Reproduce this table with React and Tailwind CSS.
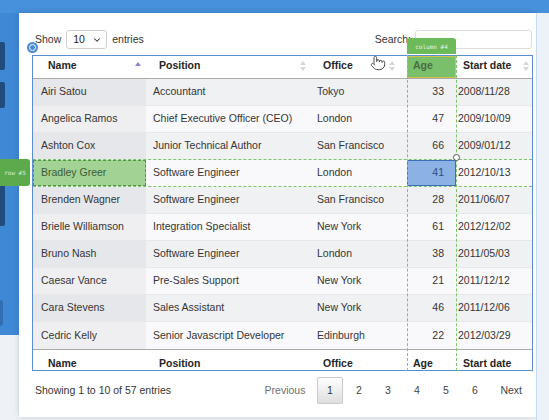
import React from "react";
import { ChevronDown, Pointer } from "lucide-react";

const rows = [
  ["Airi Satou", "Accountant", "Tokyo", "33", "2008/11/28"],
  ["Angelica Ramos", "Chief Executive Officer (CEO)", "London", "47", "2009/10/09"],
  ["Ashton Cox", "Junior Technical Author", "San Francisco", "66", "2009/01/12"],
  ["Bradley Greer", "Software Engineer", "London", "41", "2012/10/13"],
  ["Brenden Wagner", "Software Engineer", "San Francisco", "28", "2011/06/07"],
  ["Brielle Williamson", "Integration Specialist", "New York", "61", "2012/12/02"],
  ["Bruno Nash", "Software Engineer", "London", "38", "2011/05/03"],
  ["Caesar Vance", "Pre-Sales Support", "New York", "21", "2011/12/12"],
  ["Cara Stevens", "Sales Assistant", "New York", "46", "2011/12/06"],
  ["Cedric Kelly", "Senior Javascript Developer", "Edinburgh", "22", "2012/03/29"],
];

function SortBoth() {
  return (
    <svg width="6" height="10" viewBox="0 0 6 10">
      <path d="M3 0L6 4H0Z" fill="#d6d6d6" />
      <path d="M3 10L0 6H6Z" fill="#d6d6d6" />
    </svg>
  );
}

function SortUp() {
  return (
    <svg width="6" height="10" viewBox="0 0 6 10">
      <path d="M3 1L6 5H0Z" fill="#8a84cf" />
    </svg>
  );
}

function Row({ r, i }) {
  const odd = i % 2 === 0;
  const sel = i === 3;
  const rowBg = odd ? "bg-[#f0f1f3]" : "bg-[#f9f9fb]";
  const nameBg = odd ? "bg-[#e6e7ea]" : "bg-[#efeff2]";
  const border =
    i === 2 || i === 3
      ? "border-b border-dashed border-[#7cc46a]"
      : i === 9
      ? ""
      : "border-b border-[#e7e8ea]";
  return (
    <div className={`grid grid-cols-[113px_163px_98px_49px_76px] h-[27px] ${rowBg} ${border}`}>
      {sel ? (
        <div className="flex items-center pl-[7px] bg-[#a3d394] border border-dashed border-[#4f9a40] text-[#3d5a36]">
          {r[0]}
        </div>
      ) : (
        <div className={`flex items-center pl-[8px] ${nameBg}`}>{r[0]}</div>
      )}
      <div className="flex items-center pl-[7px] whitespace-nowrap">{r[1]}</div>
      <div className="flex items-center pl-[8px]">{r[2]}</div>
      {sel ? (
        <div className="flex items-center justify-end pr-[11px] bg-[#8cb1e4] border border-[#3d6fb8] text-[#2d4c7a]">
          {r[3]}
        </div>
      ) : (
        <div className="flex items-center justify-end pr-[12px]">{r[3]}</div>
      )}
      <div className="flex items-center pl-[2px]">{r[4]}</div>
    </div>
  );
}

export default function App() {
  return (
    <div className="relative w-[549px] h-[420px] overflow-hidden bg-[#eef2f6] font-['Liberation_Sans',Arial,sans-serif] text-[10.5px] text-[#353535]">
      <div className="flex flex-col h-full">
        <div className="h-[13px] shrink-0 bg-[#4790db]" />
        <div className="flex flex-1">
          <div className="w-[19px] h-[322px] shrink-0 bg-[#3f88d5] flex flex-col">
            <div className="mt-[29px] w-[5px] h-[28px] rounded-r-[2px] bg-[#1f4c7c]" />
            <div className="mt-[12px] w-[5px] h-[26px] rounded-r-[2px] bg-[#1f4c7c]" />
            <div className="mt-[77px] w-[5px] h-[41px] rounded-r-[2px] bg-[#1f4c7c]" />
            <div className="mt-[74px] w-[3px] h-[26px] rounded-r-[3px] bg-[#2f6fb2]" />
          </div>
          <div className="w-[517px] h-[404px] shrink-0 bg-white shadow-[0_0_6px_rgba(0,0,0,0.15)] pl-[13px] pr-[3px] pt-[17px]">
            {/* controls */}
            <div className="flex items-center justify-between h-[19px]">
              <div className="flex items-center pl-[3px]">
                <span>Show</span>
                <div className="ml-[5px] w-[41px] h-[19px] border border-[#cfcfcf] rounded-[3px] flex items-center justify-between pl-[6px] pr-[4px] text-[#222]">
                  <span>10</span>
                  <ChevronDown size={10} strokeWidth={2.5} color="#333" />
                </div>
                <span className="ml-[5px]">entries</span>
              </div>
              <div className="flex items-center mr-[1px]">
                <span>Search:</span>
                <div className="ml-[4px] w-[117px] h-[19px] border border-[#dcdcdc] rounded-[3px] bg-white" />
              </div>
            </div>

            {/* table */}
            <div className="relative mt-[6px] w-[501px] border border-[#5a8ed4]">
              <div className="grid grid-cols-[113px_163px_98px_49px_76px] h-[23px] border-b border-[#aaaaaa] bg-white font-bold text-[#262626]">
                <div className="flex items-center justify-between pl-[15px] pr-[5px] pb-[3px]">
                  <span>Name</span>
                  <SortUp />
                </div>
                <div className="flex items-center justify-between pl-[13px] pr-[3px] pb-[3px]">
                  <span>Position</span>
                  <SortBoth />
                </div>
                <div className="flex items-center justify-between pl-[14px] pr-[12px] pb-[3px]">
                  <span>Office</span>
                  <SortBoth />
                </div>
                <div className="flex items-center pl-[5px] pb-[2px] bg-[#7abf69] border border-[#d3c04c] text-[#4a6c46]">
                  Age
                </div>
                <div className="flex items-center justify-between pl-[7px] pr-[3px] pb-[3px]">
                  <span>Start date</span>
                  <SortBoth />
                </div>
              </div>
              {rows.map((r, i) => (
                <Row key={r[0]} r={r} i={i} />
              ))}
              <div className="grid grid-cols-[113px_163px_98px_49px_76px] h-[21px] border-t border-[#aaaaaa] bg-white font-bold text-[#262626] overflow-hidden">
                <div className="pl-[15px] pt-[7px] leading-[13px]">Name</div>
                <div className="pl-[13px] pt-[7px] leading-[13px]">Position</div>
                <div className="pl-[14px] pt-[7px] leading-[13px]">Office</div>
                <div className="pl-[6px] pt-[7px] leading-[13px]">Age</div>
                <div className="pl-[7px] pt-[7px] leading-[13px]">Start date</div>
              </div>
              {/* column guide */}
              <div className="pointer-events-none absolute left-[374px] top-[-1px] bottom-[-1px] w-[50px] border-x border-dashed border-[#7cc46a]" />
            </div>

            {/* bottom */}
            <div className="mt-[6px] h-[27px] flex items-center justify-between pl-[3px]">
              <span>Showing 1 to 10 of 57 entries</span>
              <div className="flex items-center mr-[11px] text-[#444]">
                <span className="text-[#6f6f6f]">Previous</span>
                <div className="ml-[10px] flex">
                  <div className="w-[29px] flex justify-center">
                    <div className="w-[26px] h-[27px] rounded-[2px] border border-[#cacaca] bg-gradient-to-b from-white to-[#dedede] flex items-center justify-center text-[#333]">
                      1
                    </div>
                  </div>
                  {["2", "3", "4", "5", "6"].map((n) => (
                    <div key={n} className="w-[29px] h-[27px] flex items-center justify-center">
                      {n}
                    </div>
                  ))}
                </div>
                <span className="ml-[11px]">Next</span>
              </div>
            </div>
          </div>
          <div className="flex-1 border-l border-[#c9dbee] bg-[#edf2f8]" />
        </div>
      </div>

      {/* overlays */}
      <div className="absolute left-[407px] top-[38px] w-[49px] h-[16px] rounded-t-[3px] bg-[#6cba5a] flex items-center justify-center text-[6px] text-[#e8f5e4] font-['DejaVu_Sans_Mono',monospace]">
        column #4
      </div>
      <div className="absolute left-0 top-[159px] w-[30px] h-[27px] rounded-r-[3px] bg-[#5daa4d] flex items-center justify-center text-[6px] text-[#d8efd2] font-['DejaVu_Sans_Mono',monospace]">
        row #5
      </div>
      <div className="absolute left-[27px] top-[42px] w-[11px] h-[11px] rounded-full bg-[#4a8ad8] flex items-center justify-center">
        <div className="w-[7px] h-[7px] rounded-full border border-white bg-[#4a8ad8]" />
      </div>
      <div className="absolute left-[453px] top-[154px] w-[7px] h-[7px] rounded-full border-[1.5px] border-[#555] bg-white" />
      <div className="absolute left-[370px] top-[55px]">
        <Pointer size={16} strokeWidth={1.4} color="#444" fill="white" />
      </div>
    </div>
  );
}
